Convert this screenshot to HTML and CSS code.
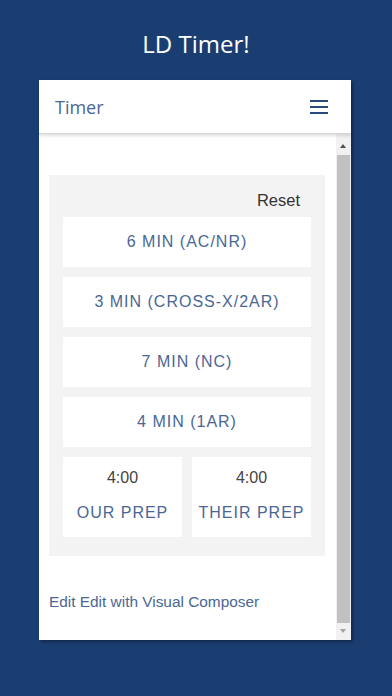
FILE: index.html
```html
<!DOCTYPE html>
<html lang="en">
<head>
  <meta charset="UTF-8" />
  <meta name="viewport" content="width=device-width, initial-scale=1.0" />
  <title>LD Timer!</title>
  <link rel="stylesheet" href="styles.css">
</head>
<body>
  <h1 class="app-title">LD Timer!</h1>

  <div class="phone">
    <div class="topbar">
      <span class="topbar-title">Timer</span>
      <svg class="menu-icon" width="18" height="14" viewBox="0 0 18 14">
        <rect x="0" y="0" width="18" height="2" fill="#2b4a7c" />
        <rect x="0" y="6" width="18" height="2" fill="#2b4a7c" />
        <rect x="0" y="12" width="18" height="2" fill="#2b4a7c" />
      </svg>
    </div>

    <div class="screen">
      <div class="page">
        <div class="timer-panel">
          <div class="reset-row"><span class="reset">Reset</span></div>
          <div class="timer-btn">6 MIN (AC/NR)</div>
          <div class="timer-btn">3 MIN (CROSS-X/2AR)</div>
          <div class="timer-btn">7 MIN (NC)</div>
          <div class="timer-btn">4 MIN (1AR)</div>
          <div class="prep-row">
            <div class="prep">
              <div class="prep-time">4:00</div>
              <div class="prep-label">OUR PREP</div>
            </div>
            <div class="prep">
              <div class="prep-time">4:00</div>
              <div class="prep-label">THEIR PREP</div>
            </div>
          </div>
        </div>
        <a class="edit-link" href="#">Edit Edit with Visual Composer</a>
      </div>

      <div class="scrollbar">
        <div class="scroll-arrow up"></div>
        <div class="scroll-thumb"></div>
        <div class="scroll-arrow down"></div>
      </div>
    </div>
  </div>
</body>
</html>
```

FILE: styles.css
```css
* { margin: 0; padding: 0; box-sizing: border-box; }
body {
  background: #1b3e72;
  font-family: "Liberation Sans", Arial, sans-serif;
  height: 696px;
  overflow: hidden;
}
.app-title {
  font-family: "Open Sans", sans-serif;
  font-weight: 400;
  font-size: 24px;
  color: #ffffff;
  text-align: center;
  line-height: 32px;
  padding-top: 28px;
  height: 80px;
}
.phone {
  margin-left: 39px;
  width: 312px;
  height: 560px;
  background: #ffffff;
  box-shadow: 2px 2px 3px rgba(0, 0, 0, 0.35);
  display: flex;
  flex-direction: column;
}
.topbar {
  height: 54px;
  display: flex;
  align-items: center;
  justify-content: space-between;
  padding: 0 23px 0 16px;
  border-bottom: 1px solid #d6d6d6;
  box-shadow: 0 2px 3px rgba(0, 0, 0, 0.12);
  position: relative;
  z-index: 1;
}
.topbar-title {
  font-family: "Open Sans", sans-serif;
  font-size: 18px;
  color: #4a6794;
}
.menu-icon { display: block; }
.screen {
  flex: 1;
  display: flex;
  min-height: 0;
}
.page {
  flex: 1;
  padding: 41px 11px 0 10px;
}
.timer-panel {
  background: #f3f3f3;
  padding: 12px 14px 19px 14px;
}
.reset-row {
  text-align: right;
  padding-right: 11px;
  height: 30px;
  line-height: 26px;
}
.reset {
  font-size: 16.5px;
  color: #333333;
}
.timer-btn {
  background: #ffffff;
  height: 50px;
  line-height: 50px;
  text-align: center;
  font-size: 16px;
  letter-spacing: 1px;
  color: #4a6794;
  margin-bottom: 10px;
}
.prep-row {
  display: grid;
  grid-template-columns: 1fr 1fr;
  gap: 10px;
}
.prep {
  background: #ffffff;
  height: 80px;
  text-align: center;
  padding-top: 11px;
}
.prep-time {
  font-size: 16px;
  color: #444444;
  line-height: 20px;
}
.prep-label {
  font-size: 16px;
  letter-spacing: 1px;
  color: #4a6794;
  line-height: 20px;
  margin-top: 15px;
}
.edit-link {
  display: block;
  margin-top: 37px;
  font-size: 15.4px;
  color: #4a6794;
  text-decoration: none;
}
.scrollbar {
  width: 15px;
  background: #f1f1f1;
  display: flex;
  flex-direction: column;
  padding-top: 4px;
}
.scroll-arrow {
  height: 17px;
  position: relative;
}
.scroll-arrow::after {
  content: "";
  position: absolute;
  left: 4px;
  top: 6px;
  border-left: 3.5px solid transparent;
  border-right: 3.5px solid transparent;
}
.scroll-arrow.up::after { border-bottom: 4px solid #505050; }
.scroll-arrow.down::after { border-top: 4px solid #a3a3a3; }
.scroll-thumb {
  flex: 1;
  background: #c1c1c1;
  margin: 0 1px;
}
```
